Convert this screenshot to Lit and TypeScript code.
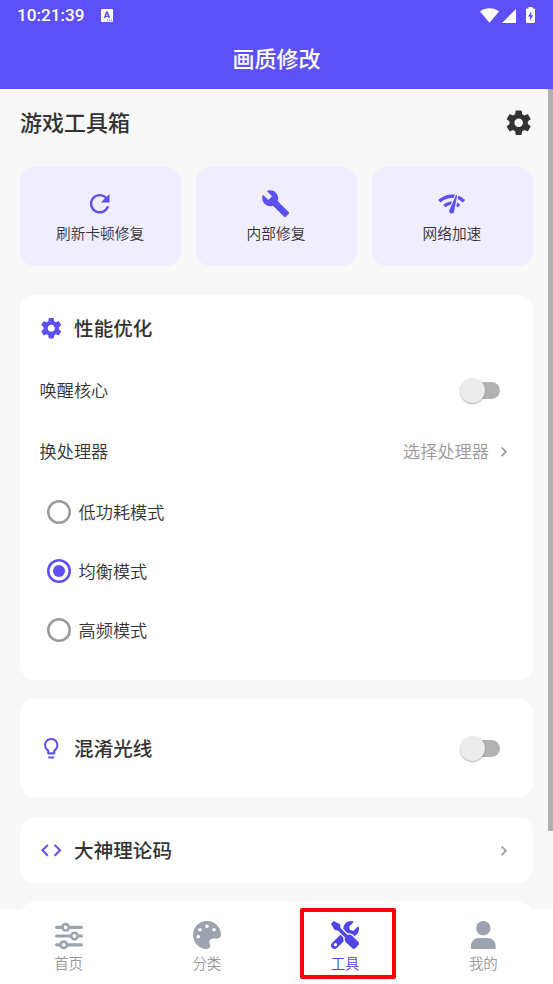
import { LitElement, html, svg, css } from "lit";
import { customElement, property, state } from "lit/decorators.js";
import { classMap } from "lit/directives/class-map.js";

const icons: Record<string, { box: string; art: unknown }> = {
  settings: {
    box: "0 0 24 24",
    art: svg`<path d="M19.43 12.98c.04-.32.07-.64.07-.98s-.03-.66-.07-.98l2.11-1.65c.19-.15.24-.42.12-.64l-2-3.46c-.12-.22-.39-.3-.61-.22l-2.49 1c-.52-.4-1.08-.73-1.69-.98l-.38-2.65C14.46 2.18 14.25 2 14 2h-4c-.25 0-.46.18-.49.42l-.38 2.65c-.61.25-1.17.59-1.69.98l-2.49-1c-.23-.09-.49 0-.61.22l-2 3.46c-.13.22-.07.49.12.64l2.11 1.65c-.04.32-.07.65-.07.98s.03.66.07.98l-2.11 1.65c-.19.15-.24.42-.12.64l2 3.46c.12.22.39.3.61.22l2.49-1c.52.4 1.08.73 1.69.98l.38 2.65c.03.24.24.42.49.42h4c.25 0 .46-.18.49-.42l.38-2.65c.61-.25 1.17-.59 1.69-.98l2.49 1c.23.09.49 0 .61-.22l2-3.46c.12-.22.07-.49-.12-.64l-2.11-1.65zM12 15.5c-1.93 0-3.5-1.57-3.5-3.5s1.57-3.5 3.5-3.5 3.5 1.57 3.5 3.5-1.57 3.5-3.5 3.5z"/>`,
  },
  refresh: {
    box: "0 0 24 24",
    art: svg`<path d="M17.65 6.35C16.2 4.9 14.21 4 12 4c-4.42 0-7.99 3.58-7.99 8s3.57 8 7.99 8c3.73 0 6.84-2.55 7.73-6h-2.08c-.82 2.33-3.04 4-5.65 4-3.31 0-6-2.69-6-6s2.69-6 6-6c1.66 0 3.14.69 4.22 1.78L13 11h7V4l-2.35 2.35z"/>`,
  },
  build: {
    box: "0 0 24 24",
    art: svg`<path d="M22.7 19l-9.1-9.1c.9-2.3.4-5-1.5-6.9-2-2-5-2.4-7.4-1.3L9 6 6 9 1.6 4.7C.4 7.1.9 10.1 2.9 12.1c1.9 1.9 4.6 2.4 6.9 1.5l9.1 9.1c.4.4 1 .4 1.4 0l2.3-2.3c.5-.4.5-1.1.1-1.4z"/>`,
  },
  network: {
    box: "0 0 24 24",
    art: svg`<path d="M15.9 5c-.17 0-.32.09-.41.23l-.07.15-5.18 11.65c-.16.29-.26.61-.26.96 0 1.11.9 2.01 2.01 2.01.96 0 1.77-.68 1.96-1.59l.01-.03L16.4 5.5c0-.28-.22-.5-.5-.5zM1 9l2 2c2.88-2.88 6.79-4.08 10.53-3.62l1.19-2.68C9.89 3.84 4.74 5.27 1 9zm20 2l2-2c-1.64-1.64-3.55-2.82-5.59-3.57l-.53 2.82c1.5.62 2.9 1.53 4.12 2.75zm-4 4l2-2c-.8-.8-1.7-1.42-2.66-1.89l-.55 2.92c.42.27.83.59 1.21.97zM5 13l2 2c1.13-1.13 2.56-1.79 4.03-2l1.28-2.88c-2.63-.08-5.3.87-7.31 2.88z"/>`,
  },
  bulb: {
    box: "0 0 24 24",
    art: svg`<path d="M9 21c0 .55.45 1 1 1h4c.55 0 1-.45 1-1v-1H9v1zm3-19C8.14 2 5 5.14 5 9c0 2.38 1.19 4.47 3 5.74V17c0 .55.45 1 1 1h6c.55 0 1-.45 1-1v-2.26c1.81-1.27 3-3.36 3-5.74 0-3.86-3.14-7-7-7zm2.85 11.1l-.85.6V16h-4v-2.3l-.85-.6C7.8 12.16 7 10.63 7 9c0-2.76 2.24-5 5-5s5 2.24 5 5c0 1.63-.8 3.16-2.15 4.1z"/>`,
  },
  code: {
    box: "0 0 24 24",
    art: svg`<path d="M9.4 16.6L4.8 12l4.6-4.6L8 6l-6 6 6 6 1.4-1.4zm5.2 0l4.6-4.6-4.6-4.6L16 6l6 6-6 6-1.4-1.4z"/>`,
  },
  chevron: {
    box: "0 0 24 24",
    art: svg`<path d="M10 6L8.59 7.41 13.17 12l-4.58 4.59L10 18l6-6z"/>`,
  },
  sliders: {
    box: "0 0 28 28",
    art: svg`<g fill="none" stroke="currentColor" stroke-linecap="round">
      <path stroke-width="3.2" d="M1.6 6.3h5M15 6.3h11.400M1.600 15h13.500M24 15h2.400M1.600 23.800h3M13 23.800h13.400"/>
      <g stroke-width="2.6"><circle cx="10.600" cy="6.300" r="3.200"/><circle cx="19.500" cy="15" r="3.200"/><circle cx="8.700" cy="23.800" r="3.200"/></g></g>`,
  },
  palette: {
    box: "0 0 512 512",
    art: svg`<path d="M204.200 5C105 24.400 25 104.200 5.300 203.400c-37.400 187 131.700 326.400 258.800 306.700 41.200-6.400 61.400-54.600 42.500-91.700-23.100-45.400 9.900-98.400 60.900-98.400h79.700c35.800 0 64.800-29.600 64.900-65.300C511.500 97.100 368.100-26.900 204.200 5zM96 320c-17.700 0-32-14.300-32-32s14.300-32 32-32 32 14.300 32 32-14.300 32-32 32zm32-128c-17.700 0-32-14.300-32-32s14.300-32 32-32 32 14.300 32 32-14.300 32-32 32zm128-64c-17.700 0-32-14.300-32-32s14.300-32 32-32 32 14.300 32 32-14.300 32-32 32zm128 64c-17.700 0-32-14.300-32-32s14.300-32 32-32 32 14.300 32 32-14.300 32-32 32z"/>`,
  },
  tools: {
    box: "0 0 512 512",
    art: svg`<path d="M0 50L50 0l114 60 12 72 126 126c24-14 58-12 80 8l120 120c14 14 14 40 0 54l-58 58c-14 14-40 14-54 0L266 384c-20-22-22-56-8-80L134 178l-74-16z"/><path d="M331.700 225c28.300 0 54.900 11 74.900 31l19.400 19.400c15.800-6.900 30.800-16.500 43.800-29.500 37.100-37.100 49.700-89.300 37.900-136.700-2.200-9-13.500-12.100-20.100-5.500l-74.400 74.400-67.900-11.300L334 98.900l74.400-74.400c6.600-6.600 3.400-17.900-5.700-20.200-47.400-11.700-99.600.9-136.600 37.900-28.500 28.500-41.900 66.100-41.200 103.600l82.100 82.100c8.100-1.900 16.500-2.900 24.700-2.900zM227.800 307l-56.700-56.700L18.700 402.800c-25 25-25 65.500 0 90.500s65.500 25 90.500 0l123.600-123.600c-7.600-19.900-9.900-41.600-5-62.700zM80 462c-17 0-30-13-30-30s13-30 30-30 30 13 30 30-13 30-30 30z"/>`,
  },
  person: {
    box: "0 0 28 28",
    art: svg`<circle cx="14.300" cy="7.200" r="7.200"/><path d="M2 28v-3c0-4.500 3.600-8 8-8h8.600c4.400 0 8 3.500 8 8v3z"/>`,
  },
  keyboard: {
    box: "0 0 12 13",
    art: svg`<path fill-rule="evenodd" d="M1 0h10a1 1 0 0 1 1 1v11a1 1 0 0 1-1 1H1a1 1 0 0 1-1-1V1a1 1 0 0 1 1-1zM5 2.500L2.700 9.200h1.500l.4-1.300h2.700l.4 1.300h1.600L6.900 2.500zM5.950 4.400l.9 2.400H5.050zM6 10.700v1h1.100v-1zM8 10.700v1h1.100v-1zM10 10.700v1h1.100v-1z"/>`,
  },
  wifi: { box: "0 0 20 15", art: svg`<path d="M0 3.200C5.500-1.100 14.500-1.100 20 3.200L10 15z"/>` },
  signal: { box: "0 0 14 14", art: svg`<path d="M14 0v14H0z"/>` },
  battery: {
    box: "0 0 9 16",
    art: svg`<path fill-rule="evenodd" d="M2.500 0h4v1.500H8a1 1 0 0 1 1 1V15a1 1 0 0 1-1 1H1a1 1 0 0 1-1-1V2.500a1 1 0 0 1 1-1h1.500zM5.300 4.200L2 9.600h2v4l3.200-5.400h-2z"/>`,
  },
};

@customElement("ui-icon")
class UiIcon extends LitElement {
  @property() name = "";
  static styles = css`
    :host { display: block; flex: none; }
    .art { display: block; width: 100%; height: 100%; fill: currentColor; }
  `;
  render() {
    const icon = icons[this.name];
    return html`<svg class="art" viewBox=${icon.box}>${icon.art}</svg>`;
  }
}

@customElement("toggle-switch")
class ToggleSwitch extends LitElement {
  static styles = css`
    :host { display: flex; align-items: center; flex: none; width: 40px; height: 17px; margin-right: 13px;
      border-radius: 9px; background: #b2b2b2; }
    .thumb { flex: none; width: 25px; height: 25px; border-radius: 50%; background: #ececec;
      box-shadow: 0 1px 1.500px rgba(0, 0, 0, 0.3); }
  `;
  render() {
    return html`<span class="thumb"></span>`;
  }
}

@customElement("app-root")
class AppRoot extends LitElement {
  @state() mode = 1;

  static styles = css`
    :host {
      position: relative; display: flex; flex-direction: column; box-sizing: border-box;
      width: 553px; height: 984px; overflow: hidden; background: #f8f8f8; color: #333;
      font-family: "Noto Sans CJK SC", sans-serif; font-weight: 350;
    }
    .top { flex: none; height: 88.500px; background: #5d50f7; color: #fff; }
    .status { display: flex; align-items: center; height: 30px; padding: 0 18px 0 17px; }
    .time { font: 500 17.150px/30px Roboto, sans-serif; flex: none; width: 84px; }
    .kb { width: 12px; height: 13px; }
    .sys { display: flex; align-items: center; margin-left: auto; height: 30px; }
    .wifi { width: 19px; height: 15px; }
    .signal { width: 14px; height: 14px; margin: 2px 10px 0 3px; }
    .battery { width: 9px; height: 16px; margin-top: -1px; }
    .title { height: 58px; line-height: 55px; text-align: center; font-size: 22px; font-weight: 500; }
    .content { flex: 1; min-height: 0; overflow: hidden; padding: 0 20px; }
    .heading { display: flex; align-items: center; justify-content: space-between; height: 69px; margin-bottom: 9.500px;
      font-size: 22px; font-weight: 500; }
    .label { padding-bottom: 5px; }
    .gear { width: 29.400px; height: 29.400px; }
    .tiles { display: grid; grid-template-columns: repeat(3, 1fr); gap: 14.700px; margin-bottom: 29.500px; }
    .tile { display: flex; flex-direction: column; align-items: center; box-sizing: border-box; height: 98.500px;
      padding: 21.500px 1px 0 0; border-radius: 14.700px; background: #efedfe; font-size: 14.700px; line-height: 22px; }
    .tile-icon { width: 29.400px; height: 29.400px; margin-bottom: 4.500px; color: #5d50f0; }
    .card { box-sizing: border-box; margin-bottom: 19.600px; padding: 0 19.600px; border-radius: 14.700px; background: #fff; }
    .perf { height: 384.500px; }
    .light { height: 98px; padding-top: 16px; }
    .guide { height: 66px; padding-top: 1px; }
    .next { height: 66px; }
    .head { display: flex; align-items: center; height: 66px; font-size: 19.600px; font-weight: 500; }
    .head-icon { width: 24.500px; height: 24.500px; margin: 0 10.500px 0 -0.500px; color: #5d50f0; }
    .grow { flex: 1; padding-bottom: 2px; }
    .chev { width: 19.600px; height: 19.600px; color: #999; }
    .row { display: flex; align-items: center; height: 60.500px; font-size: 17.150px; }
    .row.first { height: 59.500px; padding-bottom: 1px; }
    .pick { margin-right: 5px; padding-bottom: 2px; color: #999; }
    .radio { display: flex; align-items: center; height: 59px; padding-left: 7px; font-size: 17.150px; }
    .ring { display: grid; place-items: center; width: 24.500px; height: 24.500px; margin: 0.500px 7.500px 0 0;
      box-shadow: inset 0 0 0 2.500px #999; border-radius: 50%; }
    .ring.on { box-shadow: inset 0 0 0 2.500px #5d50f0; }
    .dot { width: 12.500px; height: 12.500px; border-radius: 50%; background: #5d50f7; }
    .nav { flex: none; display: grid; grid-template-columns: repeat(4, 1fr); height: 74px; background: #fff; }
    .tab { display: flex; flex-direction: column; align-items: center; padding: 11px 1px 0 0;
      font-size: 14.500px; line-height: 22px; color: #999; }
    .tab-icon { width: 28px; height: 28px; margin-bottom: 3px; color: #9ca3af; }
    .tab.active, .tab.active .tab-icon { color: #4f46e5; }
    .bar { position: absolute; top: 89px; right: 0; width: 5px; height: 742px; background: #b1b1b1; }
    .mark { position: absolute; left: 300px; top: 908px; box-sizing: border-box; width: 96px; height: 71px;
      border: 4px solid #fd0005; border-radius: 2px; }
  `;

  private head(icon: string, text: string, end: unknown = null) {
    return html`<div class="head"><ui-icon class="head-icon" name=${icon}></ui-icon><span class="grow">${text}</span>${end}</div>`;
  }

  render() {
    const tiles = [["refresh", "刷新卡顿修复"], ["build", "内部修复"], ["network", "网络加速"]];
    const modes = ["低功耗模式", "均衡模式", "高频模式"];
    const tabs = [["sliders", "首页"], ["palette", "分类"], ["tools", "工具"], ["person", "我的"]];
    const chevron = html`<ui-icon class="chev" name="chevron"></ui-icon>`;
    return html`
      <header class="top">
        <div class="status">
          <span class="time">10:21:39</span><ui-icon class="kb" name="keyboard"></ui-icon>
          <div class="sys">
            <ui-icon class="wifi" name="wifi"></ui-icon>
            <ui-icon class="signal" name="signal"></ui-icon>
            <ui-icon class="battery" name="battery"></ui-icon>
          </div>
        </div>
        <div class="title">画质修改</div>
      </header>
      <main class="content">
        <div class="heading"><span class="label">游戏工具箱</span><ui-icon class="gear" name="settings"></ui-icon></div>
        <div class="tiles">
          ${tiles.map(([icon, label]) => html`<div class="tile"><ui-icon class="tile-icon" name=${icon}></ui-icon>${label}</div>`)}
        </div>
        <section class="card perf">
          ${this.head("settings", "性能优化")}
          <div class="row first"><span class="grow">唤醒核心</span><toggle-switch></toggle-switch></div>
          <div class="row"><span class="grow">换处理器</span><span class="pick">选择处理器</span>${chevron}</div>
          ${modes.map((label, i) => html`<div class="radio" @click=${() => (this.mode = i)}>
            <span class=${classMap({ ring: true, on: this.mode === i })}>${this.mode === i ? html`<span class="dot"></span>` : null}</span>${label}
          </div>`)}
        </section>
        <section class="card light">${this.head("bulb", "混淆光线", html`<toggle-switch></toggle-switch>`)}</section>
        <section class="card guide">${this.head("code", "大神理论码", chevron)}</section>
        <section class="card next"></section>
      </main>
      <nav class="nav">
        ${tabs.map(([icon, label], i) => html`<div class=${classMap({ tab: true, active: i === 2 })}>
          <ui-icon class="tab-icon" name=${icon}></ui-icon>${label}</div>`)}
      </nav>
      <div class="bar"></div>
      <div class="mark"></div>
    `;
  }
}
